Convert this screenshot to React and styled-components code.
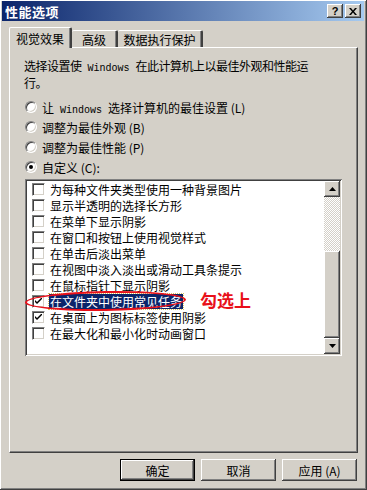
import React from 'react'
import styled, { createGlobalStyle } from 'styled-components'

const FACE = '#d4d0c8'
const FONT = '"Noto Sans CJK SC", "Liberation Sans", sans-serif'

const Global = createGlobalStyle`
  html, body { margin: 0; padding: 0; background: ${FACE}; }
  * { box-sizing: border-box; }
`

const raised = `
  box-shadow: inset -1px -1px #404040, inset 1px 1px #ffffff,
    inset -2px -2px #808080, inset 2px 2px ${FACE};
`
const sunken = `
  box-shadow: inset 1px 1px #808080, inset -1px -1px #ffffff,
    inset 2px 2px #404040, inset -2px -2px ${FACE};
`

const Frame = styled.div`
  width: 367px;
  height: 490px;
  background: ${FACE};
  ${raised}
  padding: 1px 3px 3px 2px;
  display: flex;
  flex-direction: column;
  font-family: ${FONT};
  font-size: 12px;
  color: #000;
`

const TitleBar = styled.div`
  height: 20px;
  display: flex;
  align-items: center;
  justify-content: space-between;
  padding: 0 3px;
  background: linear-gradient(to right, #0a246a, #a6caf0);
`

const Title = styled.span`
  color: #fff;
  font-weight: 700;
  font-size: 13px;
  letter-spacing: 0.5px;
`

const TitleButtons = styled.div`
  display: flex;
  gap: 2px;
`

const CaptionButton = styled.div`
  width: 16px;
  height: 14px;
  background: ${FACE};
  ${raised}
  display: flex;
  align-items: center;
  justify-content: center;
  font-family: "Liberation Sans", sans-serif;
  font-weight: 700;
  font-size: 11px;
  line-height: 1;
`

const Body = styled.div`
  flex: 1;
  display: flex;
  flex-direction: column;
  padding: 6px 6px 0 7px;
`

const TabRow = styled.div`
  display: flex;
  align-items: flex-end;
  height: 20px;
  position: relative;
  z-index: 1;
`

const Tab = styled.div`
  width: ${p => p.$w}px;
  height: ${p => (p.$active ? 21 : 17)}px;
  margin-bottom: ${p => (p.$active ? -1 : 0)}px;
  background: ${FACE};
  display: flex;
  align-items: center;
  justify-content: center;
  font-size: 12px;
  border-top: 1px solid #fff;
  border-left: ${p => (p.$first || p.$active ? '1px solid #fff' : 'none')};
  border-right: 2px solid #404040;
  border-top-left-radius: 2px;
  border-top-right-radius: 2px;
  box-shadow: inset -1px 0 #808080;
`

const Panel = styled.div`
  height: 406px;
  background: ${FACE};
  border-top: 1px solid #fff;
  border-left: 1px solid #fff;
  border-right: 1px solid #404040;
  border-bottom: 1px solid #404040;
  box-shadow: inset -1px -1px #808080;
  padding: 11px 14px 0 14px;
  display: flex;
  flex-direction: column;
`

const Description = styled.p`
  margin: 0;
  line-height: 14px;
  font-size: 12px;
  letter-spacing: -0.5px;
`

const Latin = styled.span`
  font-family: "Liberation Mono", monospace;
  font-size: 10px;
  letter-spacing: 0;
  white-space: pre;
`

const RadioGroup = styled.div`
  margin-top: 7px;
  display: flex;
  flex-direction: column;
  padding-left: 1px;
`

const RadioRow = styled.label`
  height: 20px;
  display: flex;
  align-items: center;
  gap: 5px;
`

const RadioDot = styled.span`
  width: 12px;
  height: 12px;
  border-radius: 50%;
  background: #fff;
  border: 1px solid;
  border-color: #808080 #ffffff #ffffff #808080;
  box-shadow: inset 1px 1px #404040, inset -1px -1px ${FACE};
  display: flex;
  align-items: center;
  justify-content: center;
  &::after {
    content: '';
    width: 4px;
    height: 4px;
    border-radius: 50%;
    background: ${p => (p.$on ? '#000' : 'transparent')};
  }
`

const ListBox = styled.div`
  position: relative;
  margin-top: 2px;
  margin-left: 1px;
  margin-right: 1px;
  height: 177px;
  background: #fff;
  ${sunken}
  padding: 2px;
  display: flex;
`

const Items = styled.div`
  flex: 1;
  display: flex;
  flex-direction: column;
`

const Item = styled.div`
  height: 16px;
  display: flex;
  align-items: center;
  padding-left: 5px;
  gap: 4px;
`

const Check = styled.span`
  width: 13px;
  height: 13px;
  flex: none;
  background: #fff;
  border: 1px solid;
  border-color: #808080 #ffffff #ffffff #808080;
  box-shadow: inset 1px 1px #404040, inset -1px -1px ${FACE};
  display: flex;
  align-items: center;
  justify-content: center;
`

const ItemText = styled.span`
  padding: 0 1px;
  line-height: 15px;
  background: ${p => (p.$sel ? '#0a246a' : 'transparent')};
  color: ${p => (p.$sel ? '#fff' : '#000')};
  outline: ${p => (p.$sel ? '1px dotted #d6c060' : 'none')};
`

const ScrollBar = styled.div`
  width: 16px;
  display: flex;
  flex-direction: column;
`

const ScrollButton = styled.div`
  height: 16px;
  background: ${FACE};
  ${raised}
  display: flex;
  align-items: center;
  justify-content: center;
`

const Track = styled.div`
  height: ${p => p.$h}px;
  background: repeating-conic-gradient(#ffffff 0 25%, ${FACE} 0 50%) 0 0 / 2px 2px;
`

const Thumb = styled.div`
  flex: 1;
  background: ${FACE};
  ${raised}
`

const Ellipse = styled.div`
  position: absolute;
  left: 0;
  top: 112px;
  width: 161px;
  height: 20px;
  border: 2px solid #e8101a;
  border-radius: 50%;
  transform: rotate(-1deg);
  pointer-events: none;
`

const Note = styled.span`
  position: absolute;
  left: 175px;
  top: 110px;
  color: #e8101a;
  font-size: 17px;
  font-weight: 700;
  line-height: 22px;
`

const ButtonRow = styled.div`
  display: flex;
  justify-content: flex-end;
  gap: 6px;
  margin-top: 6px;
  padding-right: 1px;
`

const Button = styled.div`
  width: 75px;
  height: 22px;
  background: ${FACE};
  display: flex;
  align-items: center;
  justify-content: center;
  font-size: 12px;
  ${raised}
  ${p => p.$default && `
    outline: 1px solid #000;
    outline-offset: -1px;
    box-shadow: inset -2px -2px #404040, inset 2px 2px #ffffff,
      inset -3px -3px #808080;
  `}
`

const Arrow = ({ up }) => (
  <svg width="7" height="4" viewBox="0 0 7 4">
    <path d={up ? 'M3.5 0 L7 4 L0 4 Z' : 'M0 0 L7 0 L3.5 4 Z'} fill="#000" />
  </svg>
)

const Tick = () => (
  <svg width="7" height="7" viewBox="0 0 7 7">
    <path d="M0 2 L0 4 L2 6 L7 1 L7 -1 L2 4 Z" fill="#000" />
  </svg>
)

const options = [
  { label: <>让<Latin> Windows </Latin>选择计算机的最佳设置 (L)</>, key: 'l', on: false },
  { label: '调整为最佳外观 (B)', key: 'b', on: false },
  { label: '调整为最佳性能 (P)', key: 'p', on: false },
  { label: '自定义 (C):', key: 'c', on: true },
]

const items = [
  { text: '为每种文件夹类型使用一种背景图片' },
  { text: '显示半透明的选择长方形' },
  { text: '在菜单下显示阴影' },
  { text: '在窗口和按钮上使用视觉样式' },
  { text: '在单击后淡出菜单' },
  { text: '在视图中淡入淡出或滑动工具条提示' },
  { text: '在鼠标指针下显示阴影' },
  { text: '在文件夹中使用常见任务', checked: true, sel: true },
  { text: '在桌面上为图标标签使用阴影', checked: true },
  { text: '在最大化和最小化时动画窗口' },
]

export default function App() {
  return (
    <>
      <Global />
      <Frame>
        <TitleBar>
          <Title>性能选项</Title>
          <TitleButtons>
            <CaptionButton>?</CaptionButton>
            <CaptionButton>
              <svg width="8" height="7" viewBox="0 0 8 7">
                <path d="M0 0h2l2 2.5L6 0h2L5 3.5 8 7H6L4 4.5 2 7H0l3-3.5z" fill="#000" />
              </svg>
            </CaptionButton>
          </TitleButtons>
        </TitleBar>
        <Body>
          <TabRow>
            <Tab $active $first $w={63}>视觉效果</Tab>
            <Tab $w={46}>高级</Tab>
            <Tab $w={85}>数据执行保护</Tab>
          </TabRow>
          <Panel>
            <Description>
              选择设置使<Latin> Windows </Latin>在此计算机上以最佳外观和性能运
              <br />
              行。
            </Description>
            <RadioGroup>
              {options.map(o => (
                <RadioRow key={o.key}>
                  <RadioDot $on={o.on} />
                  <span>{o.label}</span>
                </RadioRow>
              ))}
            </RadioGroup>
            <ListBox>
              <Items>
                {items.map(it => (
                  <Item key={it.text}>
                    <Check>{it.checked && <Tick />}</Check>
                    <ItemText $sel={it.sel}>{it.text}</ItemText>
                  </Item>
                ))}
              </Items>
              <ScrollBar>
                <ScrollButton><Arrow up /></ScrollButton>
                <Track $h={54} />
                <Thumb />
                <ScrollButton><Arrow /></ScrollButton>
              </ScrollBar>
              <Ellipse />
              <Note>勾选上</Note>
            </ListBox>
          </Panel>
          <ButtonRow>
            <Button $default>确定</Button>
            <Button>取消</Button>
            <Button>应用 (A)</Button>
          </ButtonRow>
        </Body>
      </Frame>
    </>
  )
}
